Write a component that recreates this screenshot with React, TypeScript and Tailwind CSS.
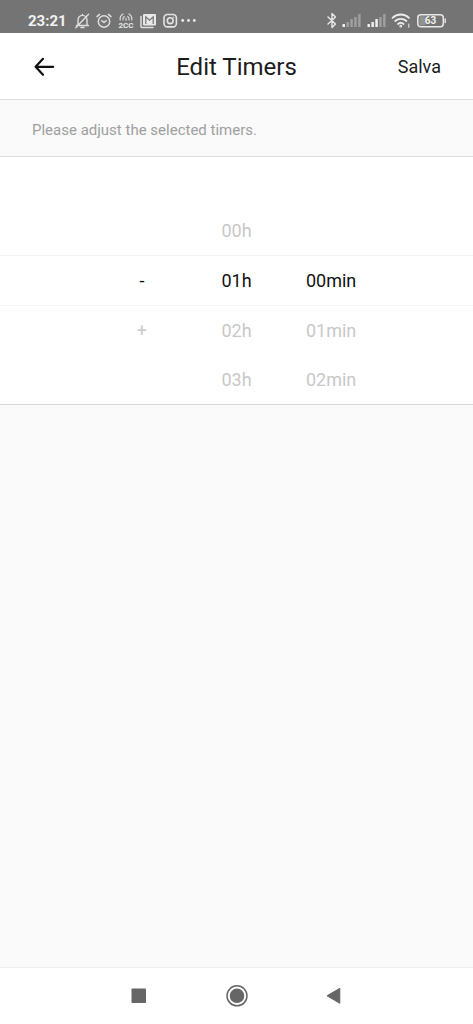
import React, { useState } from 'react';

const SIGNS = ['-', '+'];
const HOURS = Array.from({ length: 24 }, (_, i) => `${String(i).padStart(2, '0')}h`);
const MINUTES = Array.from({ length: 60 }, (_, i) => `${String(i).padStart(2, '0')}min`);

const BellOffIcon = () => (
    <svg width="22" height="22" viewBox="0 0 22 22" fill="none" stroke="#dedede" strokeWidth="1.4" strokeLinecap="round" strokeLinejoin="round" aria-hidden="true">
        <path d="M5.500 14.500h12M7 14.300V9c0-2.600 1.800-4.600 4.400-4.600S16 6.400 16 9v5.300M11.400 4.200V3.400M10 16.500h3M4.800 16.800L17.600 3.300" />
    </svg>
);

const AlarmIcon = () => (
    <svg width="22" height="22" viewBox="0 0 22 22" fill="none" stroke="#dedede" strokeWidth="1.5" strokeLinecap="round" strokeLinejoin="round" aria-hidden="true">
        <circle cx="11" cy="10.500" r="5.700" />
        <path d="M8.700 9.700l2.300 1.800 2.300-1.800M4 5.600l2.500-2.200M18 5.600l-2.500-2.200" />
    </svg>
);

const HotspotIcon = () => (
    <svg width="22" height="22" viewBox="0 0 22 22" fill="none" stroke="#dedede" strokeWidth="1.2" strokeLinecap="round" aria-hidden="true">
        <path d="M5.200 9A6 6 0 0 1 8 3M16.800 9A6 6 0 0 0 14 3M8 9a3.400 3.400 0 0 1 1.300-3.500M14 9a3.400 3.400 0 0 0-1.300-3.500M11 7.400v1.800" />
        <text x="11" y="17" textAnchor="middle" fontSize="8" fontWeight="700" fill="#e8e8e8" stroke="none">2CC</text>
    </svg>
);

const MailIcon = () => (
    <svg width="22" height="22" viewBox="0 0 22 22" fill="none" aria-hidden="true">
        <path d="M4 5.500v10.300c0 .5.300.7.700.7H16" stroke="#e0e0e0" strokeWidth="1.500" strokeLinecap="round" />
        <rect x="6" y="3" width="13" height="11.500" rx="1" fill="#e8e8e8" />
        <path d="M8.800 13V5.800l3.700 3.400 3.700-3.400V13" stroke="#747474" strokeWidth="1.200" />
    </svg>
);

const CameraIcon = () => (
    <svg width="22" height="22" viewBox="0 0 22 22" fill="none" stroke="#e4e4e4" strokeWidth="1.600" aria-hidden="true">
        <rect x="5" y="3.500" width="12.400" height="12.400" rx="3.400" />
        <circle cx="11.200" cy="9.700" r="2.900" />
        <circle cx="14.600" cy="6.300" r=".4" strokeWidth=".8" />
    </svg>
);

const DotsIcon = () => (
    <svg width="18" height="22" viewBox="0 0 18 22" fill="#e8e8e8" aria-hidden="true">
        <circle cx="1.700" cy="9.500" r="1.400" />
        <circle cx="7.500" cy="9.500" r="1.400" />
        <circle cx="13.300" cy="9.500" r="1.400" />
    </svg>
);

const BluetoothIcon = () => (
    <svg width="10" height="22" viewBox="0 0 10 22" fill="none" stroke="#e8e8e8" strokeWidth="1.400" strokeLinejoin="round" strokeLinecap="round" aria-hidden="true">
        <path d="M2 6l7.500 7L6 16.500V2.500L9.500 6 2 13" />
    </svg>
);

const SignalIcon = ({ level }: { level: number }) => (
    <svg width="20" height="22" viewBox="0 0 20 22" fill="#f0f0f0" aria-hidden="true">
        {[3, 5, 8, 10, 13].map((height, i) => (
            <rect key={height} x={1.5 + i * 3.9} y={16 - height} width="2.500" height={height} rx=".5" opacity={i < level ? 1 : 0.35} />
        ))}
    </svg>
);

const WifiIcon = () => (
    <svg width="20" height="22" viewBox="0 0 20 22" fill="none" stroke="#ececec" strokeWidth="1.800" strokeLinecap="round" aria-hidden="true">
        <path d="M1.500 6.800a12 12 0 0 1 16.500 0M4.200 10a8.200 8.200 0 0 1 11.200 0M7 13a4.200 4.200 0 0 1 5.600 0" />
        <circle cx="9.800" cy="15.200" r=".5" />
        <path d="M17.800 13v3.300" strokeWidth="1" />
    </svg>
);

const BatteryIcon = () => (
    <svg width="30" height="22" viewBox="0 0 30 22" fill="none" aria-hidden="true">
        <rect x="1.800" y="3.800" width="25.500" height="12" rx="3" stroke="#e8e8e8" strokeWidth="1.500" />
        <rect x="3.500" y="5.300" width="6" height="9" rx="1" fill="#929292" />
        <path d="M29.200 8v3.500" stroke="#e8e8e8" strokeWidth="1.400" strokeLinecap="round" />
        <text x="14.500" y="13.300" textAnchor="middle" fontSize="10" fontWeight="700" fill="#f0f0f0">63</text>
    </svg>
);

const StatusBar = () => (
    <div className="flex h-[33px] items-center justify-between bg-[#747474] pt-2.5 pr-[27px] pl-7 text-[#f2f2f2]">
        <div className="flex items-center">
            <span className="mr-1 text-[15px] font-bold">23:21</span>
            <BellOffIcon />
            <AlarmIcon />
            <HotspotIcon />
            <MailIcon />
            <CameraIcon />
            <DotsIcon />
        </div>
        <div className="flex items-center gap-[5px]">
            <BluetoothIcon />
            <SignalIcon level={1} />
            <SignalIcon level={3} />
            <WifiIcon />
            <BatteryIcon />
        </div>
    </div>
);

const Header = () => (
    <header className="grid h-[67px] grid-cols-[1fr_auto_1fr] items-center border-b border-[#dedede] bg-white px-8 pt-0.5">
        <button type="button" aria-label="Back" className="justify-self-start">
            <svg width="24" height="24" viewBox="0 0 24 24" fill="none" stroke="#111" strokeWidth="2.200" strokeLinecap="round" strokeLinejoin="round">
                <path d="M21.200 11.800H3.800M11 3.800l-7.400 8 7.400 8" />
            </svg>
        </button>
        <h1 className="text-2xl text-[#1c1c1c]">Edit Timers</h1>
        <button type="button" className="justify-self-end text-lg text-[#1c1c1c]">Salva</button>
    </header>
);

interface PickerCellProps {
    options: string[];
    selected: number;
    offset: number;
    onSelect: (index: number) => void;
}

const PickerCell: React.FC<PickerCellProps> = ({ options, selected, offset, onSelect }) => {
    const index = selected + offset;
    if (index < 0 || index >= options.length) return <span />;
    return (
        <button
            type="button"
            aria-pressed={offset === 0}
            onClick={() => onSelect(index)}
            className={offset === 0 ? 'text-[#111]' : 'text-[#c8c8c8]'}
        >
            {options[index]}
        </button>
    );
};

const TimerPicker = () => {
    const [sign, setSign] = useState(0);
    const [hour, setHour] = useState(1);
    const [minute, setMinute] = useState(0);

    return (
        <section aria-label="Timer" className="border-b border-[#d8d8d8] bg-white text-lg">
            {[-2, -1, 0, 1, 2].map((offset) => (
                <div
                    key={offset}
                    className={`grid grid-cols-5 ${offset === 0 ? 'h-[51px] border-y border-[#f3f3f3]' : 'h-[49px]'}`}
                >
                    <span />
                    <PickerCell options={SIGNS} selected={sign} offset={offset} onSelect={setSign} />
                    {/* nothing above 00h, the list does not wrap */}
                    <PickerCell options={HOURS} selected={hour} offset={offset} onSelect={setHour} />
                    <PickerCell options={MINUTES} selected={minute} offset={offset} onSelect={setMinute} />
                </div>
            ))}
        </section>
    );
};

const SystemNav = () => (
    <nav className="flex h-[57px] items-center justify-center gap-[50px] border-t border-[#efefef] bg-white">
        <button type="button" aria-label="Recent apps" className="flex w-12 justify-center">
            <svg width="24" height="24" viewBox="0 0 24 24" fill="#666">
                <rect x="4.500" y="4.500" width="14.500" height="14.500" rx=".8" />
            </svg>
        </button>
        <button type="button" aria-label="Home" className="flex w-12 justify-center">
            <svg width="24" height="24" viewBox="0 0 24 24" fill="#666">
                <circle cx="12" cy="11.800" r="7.300" />
                <circle cx="12" cy="11.800" r="10" fill="none" stroke="#666" strokeWidth="1.500" />
            </svg>
        </button>
        <button type="button" aria-label="Back to previous app" className="flex w-12 justify-center">
            <svg width="24" height="24" viewBox="0 0 24 24" fill="#666" stroke="#666" strokeLinejoin="round">
                <path d="M4 11.800L16.800 4.300v15z" />
            </svg>
        </button>
    </nav>
);

export default function App() {
    return (
        <div className="flex min-h-screen flex-col bg-[#fafafa] font-[Roboto,sans-serif]">
            <StatusBar />
            <Header />
            <main className="flex-1">
                <p className="flex h-[57px] items-center border-b border-[#dedede] px-8 pt-1 text-[15px] text-[#a0a0a0]">
                    Please adjust the selected timers.
                </p>
                <TimerPicker />
            </main>
            <SystemNav />
        </div>
    );
}
